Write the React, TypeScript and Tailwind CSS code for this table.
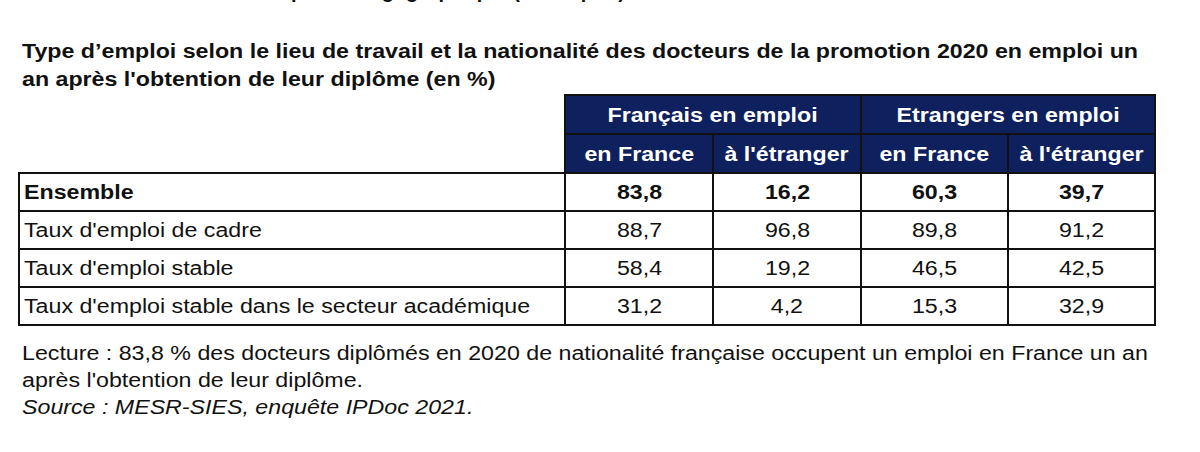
const rows = [
  { label: 'Ensemble', values: ['83,8', '16,2', '60,3', '39,7'], bold: true },
  { label: "Taux d'emploi de cadre", values: ['88,7', '96,8', '89,8', '91,2'] },
  { label: "Taux d'emploi stable", values: ['58,4', '19,2', '46,5', '42,5'] },
  { label: "Taux d'emploi stable dans le secteur académique", values: ['31,2', '4,2', '15,3', '32,9'] },
];

const head = 'border-2 border-[#111] bg-[#0f205e] text-white font-bold text-center text-[20px] h-[39px] p-0';
const cell = 'border-2 border-[#111] h-[38px] p-0 text-center';

// the source image is a bit wider than Arial, so glyphs are stretched a little
function Wide({ children, left }: { children: React.ReactNode; left?: boolean }) {
  return (
    <span className={`inline-block whitespace-nowrap scale-x-[1.16] ${left ? 'origin-left' : 'origin-center'}`}>
      {children}
    </span>
  );
}

export default function App() {
  return (
    <div className="w-[1200px] h-[452px] bg-white text-[#111] font-['Liberation_Sans',Arial,sans-serif]">
      <div className="h-[2px] overflow-hidden">
        <p className="-mt-[21px] pl-[150px] text-[20px] font-bold leading-[24px] tracking-wide">
          Tableau 5 : Répartition gégraphique (en emploi)
        </p>
      </div>
      <h1 className="mt-[35px] pl-[22px] text-[20px] font-bold leading-[28px]">
        <Wide left>Type d’emploi selon le lieu de travail et la nationalité des docteurs de la promotion 2020 en emploi un</Wide>
        <br />
        <Wide left>an après l'obtention de leur diplôme (en %)</Wide>
      </h1>
      <table className="mt-[1px] ml-[18px] border-collapse text-[20px] leading-none">
        <colgroup>
          <col className="w-[546px]" />
          <col className="w-[148px]" />
          <col className="w-[148px]" />
          <col className="w-[147px]" />
          <col className="w-[147px]" />
        </colgroup>
        <thead>
          <tr>
            <th className="border-0 p-0" rowSpan={2} />
            <th colSpan={2} className={head}><Wide>Français en emploi</Wide></th>
            <th colSpan={2} className={head}><Wide>Etrangers en emploi</Wide></th>
          </tr>
          <tr>
            <th className={head}><Wide>en France</Wide></th>
            <th className={head}><Wide>à l'étranger</Wide></th>
            <th className={head}><Wide>en France</Wide></th>
            <th className={head}><Wide>à l'étranger</Wide></th>
          </tr>
        </thead>
        <tbody>
          {rows.map((r) => (
            <tr key={r.label} className={r.bold ? 'font-bold' : ''}>
              <td className={`${cell} !text-left pl-[4px]`}><Wide left>{r.label}</Wide></td>
              {r.values.map((v, i) => (
                <td key={i} className={cell}><Wide>{v}</Wide></td>
              ))}
            </tr>
          ))}
        </tbody>
      </table>
      <div className="mt-[14px] pl-[22px] text-[20px] leading-[27px]">
        <p>
          <Wide left>Lecture : 83,8 % des docteurs diplômés en 2020 de nationalité française occupent un emploi en France un an</Wide>
          <br />
          <Wide left>après l'obtention de leur diplôme.</Wide>
        </p>
        <p className="italic"><Wide left>Source : MESR-SIES, enquête IPDoc 2021.</Wide></p>
      </div>
    </div>
  );
}
